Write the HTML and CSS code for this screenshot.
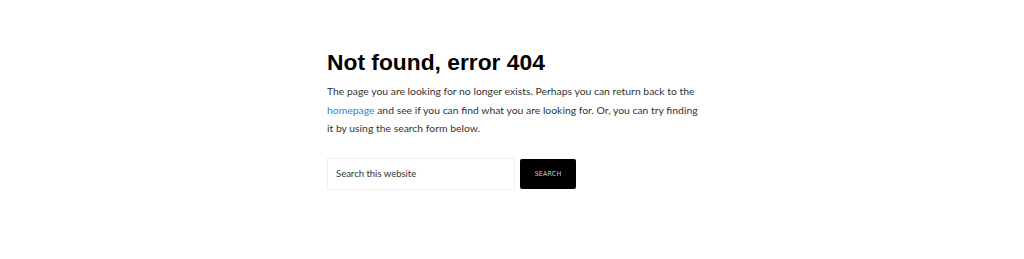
FILE: index.html
```html
<!DOCTYPE html>
<html lang="en">
<head>
<meta charset="utf-8">
<title>Not found, error 404</title>
<link rel="stylesheet" href="styles.css">
</head>
<body>
<main class="content">
  <article class="entry">
    <h1 class="entry-title">Not found, error 404</h1>
    <p class="entry-text">The page you are looking for no longer exists. Perhaps you can return back to the <a href="#">homepage</a> and see if you can find what you are looking for. Or, you can try finding it by using the search form below.</p>
    <form class="search-form">
      <input class="search-input" type="search" placeholder="Search this website">
      <button class="search-button" type="button">Search</button>
    </form>
  </article>
</main>
</body>
</html>
```

FILE: styles.css
```css
* { box-sizing: border-box; }
html, body { margin: 0; padding: 0; background: #fff; }
body {
  font-family: "Lato", "Noto Sans", sans-serif;
  color: #333;
}
.content {
  width: 380px;
  margin: 0 auto;
  padding: 46px 0 0 5px;
}
.entry-title {
  font-family: "Liberation Sans", Arial, sans-serif;
  font-weight: 700;
  font-size: 22.8px;
  line-height: 32px;
  color: #000;
  margin: 0 0 4px;
}
.entry-text {
  font-size: 10.4px;
  line-height: 18.5px;
  margin: 0 0 20px;
  color: #333;
}
.entry-text a {
  color: #2f7fd6;
  text-decoration: none;
}
.search-form {
  display: flex;
  align-items: center;
  gap: 5px;
}
.search-input {
  width: 188px;
  height: 32px;
  border: 1px solid #eee;
  padding: 0 8px;
  font-family: "Lato", "Noto Sans", sans-serif;
  font-size: 9.5px;
  color: #333;
  outline: none;
}
.search-input::placeholder { color: #333; }
.search-button {
  width: 56px;
  height: 30px;
  background: #000;
  color: #ccc;
  border: none;
  border-radius: 2px;
  font-family: "DejaVu Sans Condensed", "Liberation Sans Narrow", sans-serif;
  font-size: 7px;
  letter-spacing: 0.2px;
  text-transform: uppercase;
  padding: 0;
}
```
